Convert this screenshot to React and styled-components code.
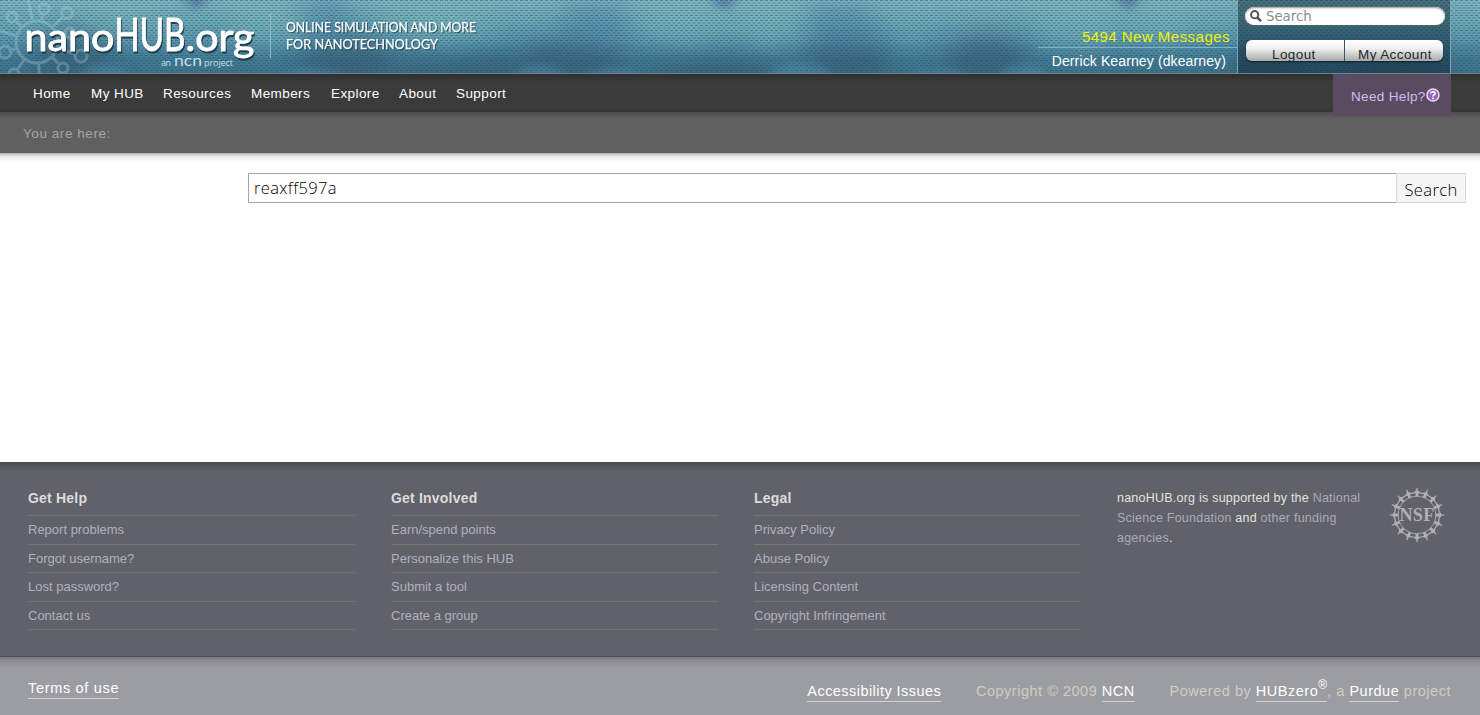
import React from 'react';
import styled, { createGlobalStyle } from 'styled-components';

const Global = createGlobalStyle`
  * { box-sizing: border-box; }
  body { margin: 0; background: #fff; font-family: "Liberation Sans", Arial, sans-serif; overflow: hidden; }
  a { color: inherit; text-decoration: none; }
`;

const Page = styled.div`
  display: flex;
  flex-direction: column;
  height: 715px;
`;

const Header = styled.header`
  position: relative;
  display: flex;
  height: 74px;
  border-bottom: 1px solid #6d858e;
  background: linear-gradient(180deg, #7db4c0 0, #6faab6 24%, #5b96ad 54%, #437b94 80%, #40738a 100%);
`;

const Backdrop = styled.svg`
  position: absolute;
  left: 0;
  top: 0;
`;

const Brand = styled.svg`
  position: relative;
  display: block;
`;

const Wordmark = styled.g`
  font-family: Lato, sans-serif;
  stroke: #fff;
  stroke-width: .9px;
  stroke-linejoin: round;
  filter: drop-shadow(1px 2px .7px rgba(20,45,58,.8));
`;

const Tagline = styled.g`
  font-family: Lato, sans-serif;
  font-size: 14px;
  stroke: #fff;
  stroke-width: .25px;
  filter: drop-shadow(1px 1px .5px rgba(20,45,58,.6));
`;

const Account = styled.div`
  position: relative;
  display: flex;
  margin-left: auto;
  margin-right: 29px;
`;

const Greeting = styled.div`
  width: 199px;
  text-align: right;
  white-space: nowrap;
  font-size: 14px;
  line-height: 18px;
`;

const Messages = styled.a`
  display: block;
  height: 48px;
  padding: 28px 7px 0 0;
  border-bottom: 1px solid #7db4c4;
  color: #f0f000;
  font-size: 15px;
  letter-spacing: .47px;
`;

const UserName = styled.div`
  padding: 4px 11px 0 0;
  color: #fff;
  letter-spacing: .12px;
`;

const Panel = styled.div`
  width: 214px;
  padding: 7px 5px 0 7px;
  border: solid #78a6b3;
  border-width: 0 1px;
  background: rgba(10,35,48,.47);
`;

const QuickSearch = styled.div`
  display: flex;
  align-items: center;
  gap: 4px;
  height: 18px;
  padding: 1px 5px 0;
  border-radius: 9px;
  background: #fff;
  box-shadow: inset 0 1px 2px #999, 0 0 1px #c8c8c8;
  color: #8e8e8e;
  font: 13.3px/18px "DejaVu Sans", sans-serif;
`;

const ButtonGroup = styled.div`
  display: flex;
  gap: 1px;
  width: 197px;
  height: 21px;
  margin: 15px 0 0 1px;
  border-radius: 6px;
  overflow: hidden;
  background: #2f5870;
  box-shadow: 0 1px 2px rgba(0,0,0,.6);
`;

const PanelButton = styled.a`
  width: 98px;
  padding: 6px 0 0 ${p => p.$indent}px;
  color: #22292d;
  font-size: 13.5px;
  line-height: 18px;
  letter-spacing: .4px;
  white-space: nowrap;
  background: linear-gradient(#fff, #f0f0f0 40%, #a9a9a9);
`;

const Nav = styled.nav`
  display: flex;
  height: 38px;
  padding-left: 33px;
  background: linear-gradient(#2e2e2e, #3b3b3b 8px, #3b3b3b 34px, #343434);
`;

const NavItem = styled.a`
  width: ${p => p.$w}px;
  padding-top: 11px;
  color: #fff;
  font-size: 13.5px;
  line-height: 18px;
  letter-spacing: .42px;
  white-space: nowrap;
`;

const Help = styled.a`
  position: relative;
  z-index: 1;
  display: flex;
  width: 118px;
  height: 42px;
  margin: 0 29px 0 auto;
  padding: 14px 0 0 18px;
  background: #5a4b60;
  color: #d3baf0;
  font-size: 13.5px;
  line-height: 18px;
  letter-spacing: .34px;
`;

const Trail = styled.div`
  height: 41px;
  padding: 13px 0 0 23px;
  background: linear-gradient(#4b4b4b, #606060 7px);
  color: #a5a5a5;
  font-size: 13.5px;
  line-height: 18px;
  letter-spacing: .56px;
`;

const Content = styled.main`
  flex: 1;
  padding: 20px 14px 0 248px;
  background: linear-gradient(#b4b4b4, #e4e4e4 3px, #fbfbfb 7px, #fff 10px);
`;

const SearchForm = styled.form`
  display: flex;
  height: 30px;
  font: 350 16.5px/28px "Open Sans", "Noto Sans", sans-serif;
`;

const Query = styled.input`
  flex: 1;
  min-width: 0;
  padding: 0 5px 1px;
  border: 1px solid #a5a5a5;
  border-right: 0;
  outline: 0;
  background: #fff;
  color: #000;
  font: inherit;
  letter-spacing: .35px;
`;

const Submit = styled.button`
  width: 70px;
  padding: 3px 0 0;
  border: 1px solid #d8d8d8;
  background: #f5f5f5;
  color: #000;
  font: inherit;
  line-height: 24px;
  letter-spacing: .4px;
`;

const Footer = styled.footer`
  display: flex;
  gap: 36px;
  height: 195px;
  padding: 26px 35px 0 28px;
  border-bottom: 1px solid #4e4d58;
  background: linear-gradient(#46464c, #55555c 4px, #61616a 10px);
`;

const Column = styled.section`
  width: 327px;
`;

const Heading = styled.h3`
  height: 28px;
  margin: 0;
  padding-top: 1px;
  border-bottom: 1px solid #737373;
  color: #dcdcdc;
  font-size: 14px;
  line-height: 18px;
  letter-spacing: .2px;
`;

const FooterLink = styled.a`
  display: block;
  height: 28.5px;
  padding-top: 5px;
  border-bottom: 1px solid #737373;
  color: #afb1bc;
  font-size: 13px;
  line-height: 17px;
`;

const Support = styled.section`
  display: flex;
  flex: 1;
  justify-content: space-between;
  color: #e4e4dc;
  font-size: 12.5px;
  line-height: 20px;
  letter-spacing: .23px;
  p { margin: 0; white-space: nowrap; }
  a { color: #a9abb8; }
`;

const Seal = styled.svg`
  margin-top: -1px;
`;

const Legal = styled.div`
  display: flex;
  height: 58px;
  padding: 21px 29px 0 28px;
  background: linear-gradient(#77767e, #8c8b92 4px, #9c9da2 10px);
  color: #cecec2;
  font-size: 14.5px;
  line-height: 20px;
  letter-spacing: .52px;
  white-space: nowrap;
`;

const LegalGroup = styled.div`
  display: flex;
  gap: 34.7px;
  margin-left: auto;
  padding-top: 3px;
`;

const LegalLink = styled.a`
  display: inline-block;
  height: 21px;
  border-bottom: 1px solid #d2d2d2;
  color: #fff;
  letter-spacing: ${p => p.$ls ?? 0.52}px;
  sup { position: relative; top: -1px; font-size: 12px; line-height: 0; letter-spacing: 0; }
`;

const navItems = [
  ['Home', 58], ['My HUB', 72], ['Resources', 88], ['Members', 80],
  ['Explore', 68], ['About', 57], ['Support', 60],
];

const columns = [
  ['Get Help', ['Report problems', 'Forgot username?', 'Lost password?', 'Contact us']],
  ['Get Involved', ['Earn/spend points', 'Personalize this HUB', 'Submit a tool', 'Create a group']],
  ['Legal', ['Privacy Policy', 'Abuse Policy', 'Licensing Content', 'Copyright Infringement']],
];

const nodes = [[12, 17, 5], [44, 9, 5], [67, 13, 5.5], [70, 33, 5], [81, 56, 6], [63, 68, 5], [5, 52, 6], [14, 74, 5], [27, -6, 5], [-6, 29, 5], [40, 84, 5]];

const shades = [
  [75, 56, 44, 24], [345, 62, 46, 26], [325, 22, 30, 24], [572, 62, 52, 24], [595, 24, 36, 20],
  [500, 70, 40, 12], [720, 74, 70, 14], [845, 60, 44, 24], [840, 26, 40, 20], [988, 60, 42, 24],
  [1265, 68, 40, 16], [1400, 68, 50, 16], [440, 72, 50, 10],
];
const glows = [
  [268, 20, 38, 24], [440, 20, 50, 20], [685, 20, 46, 24], [770, 22, 38, 24], [908, 28, 7, 14],
  [1078, 22, 44, 22], [120, 16, 40, 16], [1160, 22, 30, 18],
];
const pools = [[105, 78, 24, 14], [312, 78, 30, 9], [612, 78, 26, 9], [540, 76, 24, 11], [800, 75, 30, 13], [940, 78, 26, 7], [1024, 76, 24, 12]];

function Water() {
  return (
    <Backdrop width="1480" height="73" viewBox="0 0 1480 73">
      <defs>
        <filter id="soft" x="-80%" y="-120%" width="260%" height="340%"><feGaussianBlur stdDeviation="13" /></filter>
        <filter id="edge" x="-40%" y="-60%" width="180%" height="220%"><feGaussianBlur stdDeviation="4" /></filter>
        <pattern id="mesh" width="5" height="5" patternUnits="userSpaceOnUse">
          <path d="M0 .5H3M2.5 3H5M0 3H.5" stroke="#17455f" strokeOpacity=".42" />
        </pattern>
      </defs>
      {shades.map(([x, y, rx, ry]) => <ellipse key={`${x}-${y}`} cx={x} cy={y} rx={rx} ry={ry} fill={y < 40 ? '#4b83a6' : '#34556b'} fillOpacity=".55" filter="url(#soft)" />)}
      {glows.map(([x, y, rx, ry]) => <ellipse key={x} cx={x} cy={y} rx={rx} ry={ry} fill="#7bb9bb" fillOpacity=".5" filter="url(#soft)" />)}
      {pools.map(([x, y, rx, ry]) => <ellipse key={x} cx={x} cy={y} rx={rx} ry={ry} fill="#5292b4" fillOpacity=".5" filter="url(#edge)" />)}
      {[196, 724, 1128].map(x => <path key={x} d={`M${x - 16} -4H${x + 16}L${x} 9Z`} fill="#4d72a0" fillOpacity=".85" filter="url(#edge)" />)}
      <rect width="1480" height="73" fill="url(#mesh)" />
      <g fill="none" stroke="#b4d6e0" strokeOpacity=".3" strokeWidth="3">
        <circle cx="37" cy="42" r="21" />
        {nodes.map(([x, y, r]) => {
          const d = Math.hypot(x - 37, y - 42);
          const ux = (x - 37) / d;
          const uy = (y - 42) / d;
          return (
            <g key={x}>
              <path d={`M${37 + ux * 22.5} ${42 + uy * 22.5}L${x - ux * (r + 1.5)} ${y - uy * (r + 1.5)}`} />
              <circle cx={x} cy={y} r={r} />
            </g>
          );
        })}
      </g>
    </Backdrop>
  );
}

function Logo() {
  return (
    <Brand width="520" height="73" viewBox="0 0 520 73" fill="#fff">
      <Wordmark>
        <text x="24.5" y="50.5" fontSize="38.5" textLength="90" lengthAdjust="spacingAndGlyphs">nano</text>
        <text x="114.5" y="50.5" fontSize="45.5" textLength="71" lengthAdjust="spacingAndGlyphs">HUB</text>
        <text x="185.5" y="50.5" fontSize="38.5" textLength="69" lengthAdjust="spacingAndGlyphs">.org</text>
      </Wordmark>
      <g fill="#c5dfe6">
        <text x="161" y="66" fontFamily="Open Sans" fontSize="9" textLength="10">an</text>
        <text x="174" y="66" fontFamily="Lato" fontSize="15" textLength="28" lengthAdjust="spacingAndGlyphs">ncn</text>
        <text x="204" y="66" fontFamily="Open Sans" fontSize="9" textLength="29">project</text>
      </g>
      <path d="M270.5 13V58" stroke="#8db9c6" />
      <Tagline>
        <text x="286" y="32" textLength="190" lengthAdjust="spacingAndGlyphs">ONLINE SIMULATION AND MORE</text>
        <text x="286" y="49" textLength="152" lengthAdjust="spacingAndGlyphs">FOR NANOTECHNOLOGY</text>
      </Tagline>
    </Brand>
  );
}

function Magnifier() {
  return (
    <svg width="12" height="13" viewBox="0 0 12 13" fill="none" stroke="#555">
      <circle cx="4.7" cy="4.7" r="3.6" strokeWidth="2" />
      <path d="M7.4 7.6L11 11.2" strokeWidth="2.6" />
    </svg>
  );
}

function HelpIcon() {
  return (
    <svg width="14" height="14" viewBox="0 0 14 14">
      <circle cx="7" cy="7" r="6" fill="#9a62c0" stroke="#e9dcf4" strokeWidth="1.5" />
      <path d="M4.9 5.6C4.9 3.4 9.1 3.4 9.1 5.5C9.1 7 7 6.8 7 8.5M7 9.5V11.2" fill="none" stroke="#fff" strokeWidth="1.7" />
    </svg>
  );
}

function NsfSeal() {
  const arms = Array.from({ length: 16 }, (_, i) => i * 22.5);
  return (
    <Seal width="56" height="56" viewBox="-28 -28 56 56" fill="none" stroke="#afafb4">
      <circle r="18.8" strokeWidth=".9" />
      <circle r="22.4" strokeWidth="1.2" />
      {arms.map(a => (
        <path key={a} transform={`rotate(${a})`} d="M-.5-27.3H.5L.8-24.4L2.8-23.2L1.3-21.6L1.5-18.8H-1.5L-1.3-21.6L-2.8-23.2L-.8-24.4Z" fill="#afafb4" stroke="none" />
      ))}
      <text x="-17.5" y="6.2" stroke="none" fill="#afafb4" fontFamily="Liberation Serif" fontWeight="700" fontSize="19" textLength="35" lengthAdjust="spacingAndGlyphs">NSF</text>
    </Seal>
  );
}

export default function App() {
  return (
    <Page>
      <Global />
      <Header>
        <Water />
        <Logo />
        <Account>
          <Greeting>
            <Messages>5494 New Messages</Messages>
            <UserName>Derrick Kearney (dkearney)</UserName>
          </Greeting>
          <Panel>
            <QuickSearch><Magnifier />Search</QuickSearch>
            <ButtonGroup>
              <PanelButton $indent={26}>Logout</PanelButton>
              <PanelButton $indent={13}>My Account</PanelButton>
            </ButtonGroup>
          </Panel>
        </Account>
      </Header>
      <Nav>
        {navItems.map(([label, w]) => <NavItem key={label} $w={w}>{label}</NavItem>)}
        <Help>Need Help?<HelpIcon /></Help>
      </Nav>
      <Trail>You are here:</Trail>
      <Content>
        <SearchForm>
          <Query defaultValue="reaxff597a" />
          <Submit type="button">Search</Submit>
        </SearchForm>
      </Content>
      <Footer>
        {columns.map(([title, links]) => (
          <Column key={title}>
            <Heading>{title}</Heading>
            {links.map(l => <FooterLink key={l}>{l}</FooterLink>)}
          </Column>
        ))}
        <Support>
          <p>
            nanoHUB.org is supported by the <a>National</a><br />
            <a>Science Foundation</a> and <a>other funding</a><br />
            <a>agencies</a>.
          </p>
          <NsfSeal />
        </Support>
      </Footer>
      <Legal>
        <LegalLink $ls={0.68}>Terms of use</LegalLink>
        <LegalGroup>
          <LegalLink $ls={0.45}>Accessibility Issues</LegalLink>
          <span>Copyright © 2009 <LegalLink>NCN</LegalLink></span>
          <span>Powered by <LegalLink>HUBzero<sup>®</sup></LegalLink>, a <LegalLink>Purdue</LegalLink> project</span>
        </LegalGroup>
      </Legal>
    </Page>
  );
}
